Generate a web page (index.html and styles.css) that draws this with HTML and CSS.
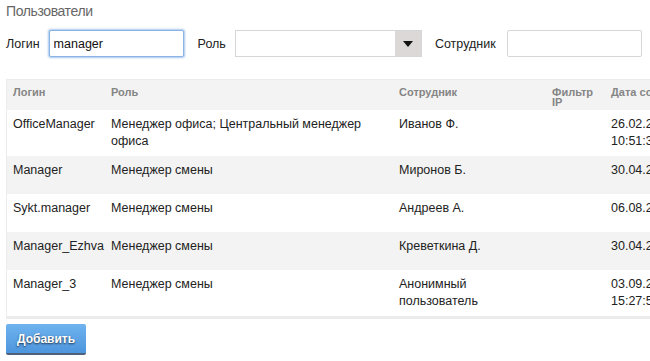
FILE: index.html
```html
<!DOCTYPE html>
<html lang="ru">
<head>
    <meta charset="UTF-8">
    <meta name="viewport" content="width=device-width, initial-scale=1.0">
    <title>Пользователи</title>
    <link rel="stylesheet" href="styles.css">
</head>
<body>
    <div class="page">
        <h1 class="title">Пользователи</h1>

        <div class="filters">
            <label class="filter-label">Логин</label>
            <input class="field field-focus login-field" type="text" value="manager">
            <label class="filter-label role-label">Роль</label>
            <div class="select">
                <div class="select-value"></div>
                <div class="select-arrow"><span class="triangle"></span></div>
            </div>
            <label class="filter-label emp-label">Сотрудник</label>
            <input class="field emp-field" type="text" value="">
        </div>

        <div class="grid-wrap">
            <table class="grid">
                <colgroup>
                    <col class="c-login">
                    <col class="c-role">
                    <col class="c-emp">
                    <col class="c-ip">
                    <col class="c-date">
                </colgroup>
                <thead>
                    <tr>
                        <th>Логин</th>
                        <th>Роль</th>
                        <th>Сотрудник</th>
                        <th>Фильтр IP</th>
                        <th>Дата создания</th>
                    </tr>
                </thead>
                <tbody>
                    <tr>
                        <td>OfficeManager</td>
                        <td>Менеджер офиса; Центральный менеджер офиса</td>
                        <td>Иванов Ф.</td>
                        <td></td>
                        <td>26.02.2015 10:51:31</td>
                    </tr>
                    <tr class="odd">
                        <td>Manager</td>
                        <td>Менеджер смены</td>
                        <td>Миронов Б.</td>
                        <td></td>
                        <td>30.04.2015</td>
                    </tr>
                    <tr>
                        <td>Sykt.manager</td>
                        <td>Менеджер смены</td>
                        <td>Андреев А.</td>
                        <td></td>
                        <td>06.08.2015</td>
                    </tr>
                    <tr class="odd">
                        <td>Manager_Ezhva</td>
                        <td>Менеджер смены</td>
                        <td>Креветкина Д.</td>
                        <td></td>
                        <td>30.04.2015</td>
                    </tr>
                    <tr>
                        <td>Manager_3</td>
                        <td>Менеджер смены</td>
                        <td>Анонимный пользователь</td>
                        <td></td>
                        <td>03.09.2015 15:27:55</td>
                    </tr>
                </tbody>
            </table>
        </div>

        <button class="add-btn">Добавить</button>
    </div>
</body>
</html>
```

FILE: styles.css
```css
body {
    margin: 0;
    padding: 0;
    background: #fff;
    color: #222;
    font-family: 'Liberation Sans', Arial, sans-serif;
    font-size: 12.5px;
    overflow: hidden;
}

.page {
    padding: 2px 0 0 6px;
    width: 720px;
}

.title {
    margin: 0;
    font-size: 14px;
    letter-spacing: -0.4px;
    line-height: 18px;
    font-weight: normal;
    color: #666;
}

/* Фильтры */
.filters {
    display: flex;
    align-items: center;
    margin-top: 10px;
    height: 27px;
}

.filter-label {
    font-size: 12.5px;
    color: #222;
}

.field {
    box-sizing: border-box;
    height: 27px;
    border: 1px solid #d6d6d6;
    border-radius: 2px;
    padding: 0 4px;
    font-family: inherit;
    font-size: 12.5px;
    color: #111;
    outline: none;
}

.field-focus {
    border-color: #8ab4e6;
    box-shadow: 0 0 2px 1px rgba(110, 160, 225, 0.6);
}

.login-field {
    width: 135px;
    margin-left: 9px;
}

.role-label {
    margin-left: 14px;
}

.select {
    box-sizing: border-box;
    display: flex;
    width: 187px;
    height: 27px;
    margin-left: 9px;
    border: 1px solid #d6d6d6;
}

.select-value {
    flex: 1;
    background: #fff;
}

.select-arrow {
    width: 26px;
    background: #dcd8d8;
    display: flex;
    justify-content: center;
    align-items: center;
}

.triangle {
    width: 0;
    height: 0;
    border-left: 5px solid transparent;
    border-right: 5px solid transparent;
    border-top: 6px solid #111;
}

.emp-label {
    margin-left: 13px;
}

.emp-field {
    width: 135px;
    margin-left: 11px;
}

/* Таблица */
.grid-wrap {
    margin-top: 22px;
    border: 1px solid #ececec;
    border-bottom-width: 3px;
}

.grid {
    border-collapse: collapse;
    table-layout: fixed;
    width: 100%;
}

.c-login { width: 98px; }
.c-role { width: 288px; }
.c-emp { width: 153px; }
.c-ip { width: 59px; }

.grid th {
    background: #f3f3f3;
    color: #858585;
    font-size: 11px;
    line-height: 10px;
    font-weight: bold;
    text-align: left;
    vertical-align: top;
    padding: 7px 6px 0;
    height: 23px;
}

.grid td {
    vertical-align: top;
    padding: 6px 6px 6px;
    line-height: 17px;
    height: 26px;
    color: #222;
}

.grid tr.odd td {
    background: #f3f3f3;
}

/* Кнопка */
.add-btn {
    margin-top: 5px;
    width: 80px;
    height: 31px;
    border: none;
    border-bottom: 2px solid #50627a;
    border-radius: 2px;
    background: linear-gradient(to bottom, #6fb3ef, #4d95dd);
    color: #fff;
    font-family: inherit;
    font-size: 12px;
    font-weight: bold;
    text-shadow: 0 1px 2px rgba(0, 0, 0, 0.7);
    cursor: pointer;
}
```
